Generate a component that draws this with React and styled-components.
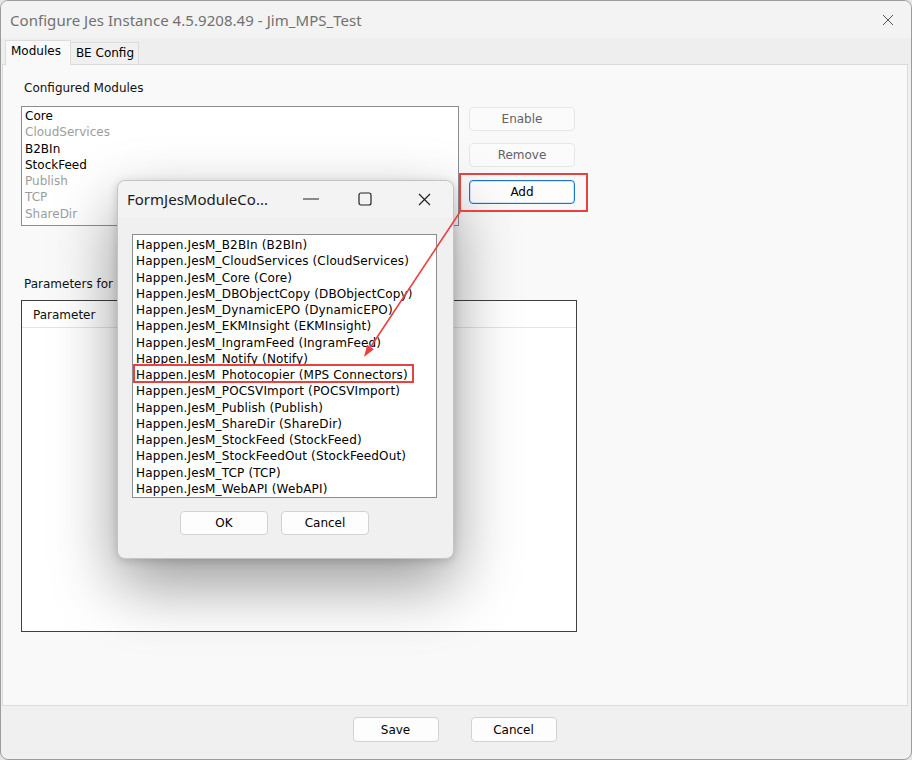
import React from "react";
import styled, { createGlobalStyle } from "styled-components";

const configured = [
  { name: "Core", enabled: true },
  { name: "CloudServices", enabled: false },
  { name: "B2BIn", enabled: true },
  { name: "StockFeed", enabled: true },
  { name: "Publish", enabled: false },
  { name: "TCP", enabled: false },
  { name: "ShareDir", enabled: false },
];

const available = [
  "Happen.JesM_B2BIn (B2BIn)",
  "Happen.JesM_CloudServices (CloudServices)",
  "Happen.JesM_Core (Core)",
  "Happen.JesM_DBObjectCopy (DBObjectCopy)",
  "Happen.JesM_DynamicEPO (DynamicEPO)",
  "Happen.JesM_EKMInsight (EKMInsight)",
  "Happen.JesM_IngramFeed (IngramFeed)",
  "Happen.JesM_Notify (Notify)",
  "Happen.JesM_Photocopier (MPS Connectors)",
  "Happen.JesM_POCSVImport (POCSVImport)",
  "Happen.JesM_Publish (Publish)",
  "Happen.JesM_ShareDir (ShareDir)",
  "Happen.JesM_StockFeed (StockFeed)",
  "Happen.JesM_StockFeedOut (StockFeedOut)",
  "Happen.JesM_TCP (TCP)",
  "Happen.JesM_WebAPI (WebAPI)",
];

export default function App() {
  return (
    <>
      <GlobalStyle />
      <Window>
        <TitleBar>
          <Title>Configure Jes Instance 4.5.9208.49 - Jim_MPS_Test</Title>
          <CaptionButton $w={46}>
            <svg width="12" height="12" viewBox="0 0 12 12">
              <path d="M1 1L11 11M11 1L1 11" stroke="#555" strokeWidth="1" />
            </svg>
          </CaptionButton>
        </TitleBar>

        <TabStrip>
          <Tab $active>Modules</Tab>
          <Tab>BE Config</Tab>
        </TabStrip>

        <TabPage>
          <Label>Configured Modules</Label>
          <ModuleRow>
            <ListBox $w={438} $h={120}>
              {configured.map((m) => (
                <ListItem key={m.name} $muted={!m.enabled}>
                  {m.name}
                </ListItem>
              ))}
            </ListBox>
            <ButtonColumn>
              <WinButton $w={106} $h={24} $disabled>Enable</WinButton>
              <WinButton $w={106} $h={24} $disabled>Remove</WinButton>
              <WinButton $w={106} $h={24} $primary>Add</WinButton>
            </ButtonColumn>
          </ModuleRow>

          <Label $top={50}>Parameters for Core</Label>
          <Grid>
            <GridHeader>Parameter</GridHeader>
          </Grid>
        </TabPage>

        <Footer>
          <WinButton $w={86}>Save</WinButton>
          <WinButton $w={86}>Cancel</WinButton>
        </Footer>

        <Dialog>
          <DialogTitleBar>
            <DialogTitle>FormJesModuleCo...</DialogTitle>
            <CaptionButton $w={48}>
              <svg width="16" height="2" viewBox="0 0 16 2">
                <path d="M0 1H16" stroke="#222" strokeWidth="1.2" />
              </svg>
            </CaptionButton>
            <CaptionButton $w={60}>
              <svg width="14" height="14" viewBox="0 0 14 14">
                <rect x="1" y="1" width="12" height="12" rx="2" fill="none" stroke="#222" strokeWidth="1.2" />
              </svg>
            </CaptionButton>
            <CaptionButton $w={58}>
              <svg width="13" height="13" viewBox="0 0 13 13">
                <path d="M1 1L12 12M12 1L1 12" stroke="#222" strokeWidth="1.2" />
              </svg>
            </CaptionButton>
          </DialogTitleBar>
          <DialogBody>
            <ListBox $w={305} $h={264} $pad={2}>
              {available.map((a) => (
                <ListItem key={a} $wide>{a}</ListItem>
              ))}
            </ListBox>
            <DialogButtons>
              <WinButton $w={88} $h={24}>OK</WinButton>
              <WinButton $w={88} $h={24}>Cancel</WinButton>
            </DialogButtons>
          </DialogBody>
        </Dialog>

        <Annotations width="912" height="760" viewBox="0 0 912 760">
          <rect x="460" y="174" width="127" height="37" fill="none" stroke="#e8413f" strokeWidth="2" />
          <rect x="134" y="365" width="279" height="17" fill="none" stroke="#e8413f" strokeWidth="2" />
          <line x1="460" y1="212" x2="370.6" y2="347" stroke="#e8413f" strokeWidth="1.6" />
          <polygon points="364,357 373.9,349.2 367.2,344.8" fill="#e8413f" />
        </Annotations>
      </Window>
    </>
  );
}

const GlobalStyle = createGlobalStyle`
  html, body {
    margin: 0;
    padding: 0;
    background: #e6e6e6;
  }
  #root {
    width: 912px;
    height: 760px;
  }
`;

const Window = styled.div`
  position: relative;
  box-sizing: border-box;
  width: 912px;
  height: 760px;
  border: 1px solid #9c9c9c;
  border-radius: 8px;
  background: #f0f0f0;
  overflow: hidden;
  display: flex;
  flex-direction: column;
  font-family: "DejaVu Sans", sans-serif;
  font-size: 12px;
  color: #000;
`;

const TitleBar = styled.div`
  height: 37px;
  display: flex;
  align-items: center;
  background: #f3f3f3;
  padding-left: 9px;
`;

const Title = styled.div`
  flex: 1;
  font-family: "Noto Sans", sans-serif;
  font-size: 15px;
  letter-spacing: 0.05px;
  color: #717171;
  white-space: nowrap;
`;

const CaptionButton = styled.div`
  width: ${(p) => p.$w}px;
  height: 100%;
  display: flex;
  align-items: center;
  justify-content: center;
`;

const TabStrip = styled.div`
  height: 26px;
  display: flex;
  align-items: flex-end;
  padding-left: 4px;
  background: #eeeeee;
`;

const Tab = styled.div`
  box-sizing: border-box;
  height: ${(p) => (p.$active ? 25 : 22)}px;
  margin-bottom: ${(p) => (p.$active ? -1 : 0)}px;
  padding: ${(p) => (p.$active ? "3px 9px 0 5px" : "3px 4px 0 5px")};
  border: 1px solid #dcdcdc;
  border-bottom: none;
  border-left: ${(p) => (p.$active ? "1px solid #dcdcdc" : "none")};
  background: ${(p) => (p.$active ? "#f9f9f9" : "#f0f0f0")};
  position: relative;
  z-index: ${(p) => (p.$active ? 1 : 0)};
`;

const TabPage = styled.div`
  flex: 1;
  margin: 0 3px 0 1px;
  padding: 15px 0 0 18px;
  background: #f9f9f9;
  border: 1px solid #dcdcdc;
`;

const Label = styled.div`
  line-height: 16px;
  margin-top: ${(p) => p.$top || 0}px;
  padding-left: 3px;
  color: #111;
`;

const ModuleRow = styled.div`
  display: flex;
  gap: 10px;
  margin-top: 10px;
`;

const ListBox = styled.div`
  box-sizing: border-box;
  width: ${(p) => p.$w}px;
  height: ${(p) => p.$h}px;
  padding: ${(p) => p.$pad || 1}px 3px;
  border: 1px solid #8a8d93;
  background: #fff;
  overflow: hidden;
`;

const ListItem = styled.div`
  line-height: 16.25px;
  white-space: nowrap;
  letter-spacing: ${(p) => (p.$wide ? "0.15px" : "0")};
  color: ${(p) => (p.$muted ? "#9d9d9d" : "#000")};
`;

const ButtonColumn = styled.div`
  display: flex;
  flex-direction: column;
  gap: 12px;
  padding-top: 1px;

  & > :last-child {
    margin-top: 1px;
  }
`;

const WinButton = styled.button`
  box-sizing: border-box;
  width: ${(p) => p.$w}px;
  height: ${(p) => p.$h || 25}px;
  padding: 0;
  font-family: "DejaVu Sans", sans-serif;
  font-size: 12px;
  border-radius: 4px;
  background: ${(p) => (p.$disabled ? "#fbfbfb" : "#fdfdfd")};
  color: ${(p) => (p.$disabled ? "#626262" : "#000")};
  border: 1px solid
    ${(p) => (p.$primary ? "#1a73c8" : p.$disabled ? "#e6e6e6" : "#d2d2d2")};
  box-shadow: ${(p) => (p.$primary ? "inset 0 0 0 1px #d6e6f6" : "none")};
`;

const Grid = styled.div`
  box-sizing: border-box;
  width: 556px;
  height: 332px;
  margin-top: 8px;
  border: 1px solid #3f3f3f;
  background: #fff;
`;

const GridHeader = styled.div`
  height: 26px;
  line-height: 28px;
  padding-left: 11px;
  border-bottom: 1px solid #e3e3e3;
  color: #111;
`;

const Footer = styled.div`
  height: 53px;
  display: flex;
  justify-content: center;
  gap: 32px;
  padding: 11px 3px 0 0;
  box-sizing: border-box;
`;

const Dialog = styled.div`
  position: absolute;
  left: 116px;
  top: 179px;
  box-sizing: border-box;
  width: 337px;
  height: 379px;
  border: 1px solid #c4c4c4;
  border-radius: 8px;
  background: #f0f0f0;
  box-shadow: 0 26px 64px rgba(0, 0, 0, 0.4), 0 2px 10px rgba(0, 0, 0, 0.16);
  display: flex;
  flex-direction: column;
  z-index: 5;
`;

const DialogTitleBar = styled.div`
  height: 36px;
  display: flex;
  align-items: center;
  padding: 0 0 0 9px;
  border-radius: 8px 8px 0 0;
  background: #f3f3f3;
`;

const DialogTitle = styled.div`
  flex: 1;
  font-family: "Noto Sans", sans-serif;
  font-size: 15px;
  color: #1b1b1b;
  white-space: nowrap;
`;

const DialogBody = styled.div`
  padding: 17px 0 0 14px;
`;

const DialogButtons = styled.div`
  display: flex;
  gap: 13px;
  margin: 13px 0 0 48px;
`;

const Annotations = styled.svg`
  position: absolute;
  left: -1px;
  top: -1px;
  pointer-events: none;
  z-index: 10;
`;
